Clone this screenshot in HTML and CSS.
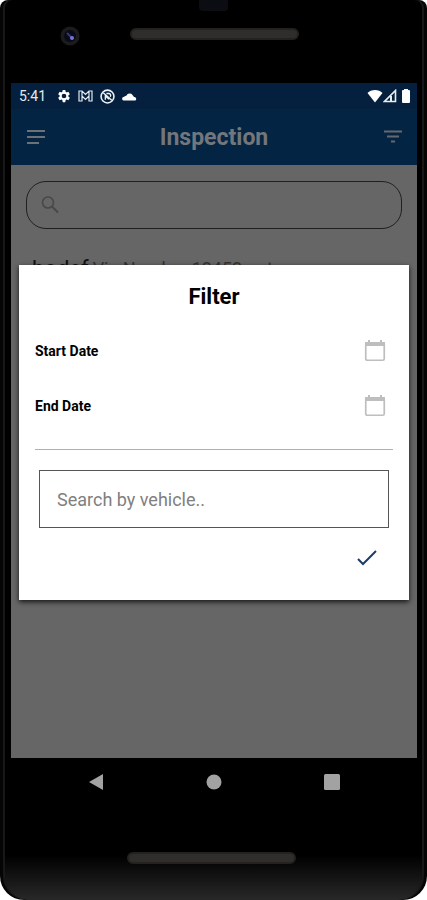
FILE: index.html
```html
<!DOCTYPE html>
<html lang="en">
<head>
<meta charset="utf-8">
<meta name="viewport" content="width=device-width, initial-scale=1">
<title>Inspection</title>
<link rel="stylesheet" href="styles.css">
</head>
<body>
<div class="phone">
  <div class="bezel-top">
    <span class="sensor"></span>
    <svg class="camera" viewBox="0 0 20 20" aria-hidden="true"><circle cx="10" cy="10" r="9.5" fill="#1b1b1c"/><circle cx="10" cy="10" r="6" fill="#090a18"/><path d="M7 7l5 5" stroke="#35377c" stroke-width="2"/><circle cx="12" cy="12" r="2" fill="#7476cf"/></svg>
    <span class="speaker"></span>
  </div>
  <div class="screen">
    <div class="status">
      <span class="time">5:41</span>
      <svg class="gear" viewBox="0 0 24 24" aria-hidden="true"><path fill="#fff" fill-rule="evenodd" d="M19.4 13a7 7 0 0 0 0-2l2.600-2-2.500-4.300-3 1.200a8 8 0 0 0-1.800-1L14.200 1.500H9.800l-.5 3.400a8 8 0 0 0-1.800 1l-3-1.200L2 9l2.600 2a7 7 0 0 0 0 2L2 15l2.500 4.300 3-1.200a8 8 0 0 0 1.800 1l.5 3.400h4.400l.5-3.400a8 8 0 0 0 1.800-1l3 1.200L22 15zM12 16a4 4 0 1 1 0-8 4 4 0 0 1 0 8z"/></svg>
      <svg class="mail" viewBox="0 0 15 12" aria-hidden="true"><path d="M1 11V1h3l3.500 3.500L11 1h3v10h-3V6L7.500 9.500 4 6v5zM4 1v5M11 1v5" fill="none" stroke="#e4e9ef" stroke-width="1.200"/></svg>
      <svg class="blocked" viewBox="0 0 14 14" aria-hidden="true"><circle cx="7" cy="7" r="6" fill="none" stroke="#eef1f5" stroke-width="1.500"/><path d="M3 3.500l8 7M5 10V6.500l3.500 3M6 4.200h2a1.800 1.800 0 0 1 1.500 3" fill="none" stroke="#eef1f5" stroke-width="1.300"/></svg>
      <svg class="cloud" viewBox="0 0 15 10" aria-hidden="true"><path fill="#fff" d="M1.500 9.500a1.800 1.800 0 0 1 0-3.500l3-1.500a3.500 3.500 0 0 1 6-.5l1.500 2a2 2 0 0 1 1.500 3.500z"/></svg>
      <span class="system">
        <svg class="wifi" viewBox="0 0 16 14" aria-hidden="true"><path fill="#fff" d="M8 13.500L.5 4C4 0 12 0 15.500 4z"/></svg>
        <svg class="signal" viewBox="0 0 14 14" aria-hidden="true"><path d="M1.500 12.500h11v-11z" fill="none" stroke="#e9edf2" stroke-width="1.600"/><path d="M8 7v5" stroke="#e9edf2" stroke-width="2"/></svg>
        <svg class="battery" viewBox="0 0 10 14" aria-hidden="true"><path fill="#fff" d="M3 0h4v1h1a1 1 0 0 1 1 1v11a1 1 0 0 1-1 1H2a1 1 0 0 1-1-1V2a1 1 0 0 1 1-1h1z"/></svg>
      </span>
    </div>
    <header class="appbar">
      <button class="icon-button" aria-label="Menu"><svg class="menu" viewBox="0 0 18 16" aria-hidden="true"><path d="M0 2h18M0 8h18M0 14h12" stroke="#6c7176" stroke-width="2"/></svg></button>
      <h1>Inspection</h1>
      <button class="icon-button" aria-label="Filter"><svg class="filter" viewBox="0 0 18 16" aria-hidden="true"><path d="M0 2.500h18M3 7.500h12M7 12.500h4" stroke="#65696f" stroke-width="1.800"/></svg></button>
    </header>
    <main class="content">
      <label class="search">
        <svg viewBox="0 0 18 18" aria-hidden="true"><circle cx="7" cy="6.500" r="5.500" fill="none" stroke="#484848" stroke-width="1.600"/><path d="M11 10.500l6 6" stroke="#484848" stroke-width="2"/></svg>
        <input type="search" aria-label="Search inspections">
      </label>
      <p class="record"><span>bodef</span> <small>Vin Number 12452 not</small></p>
    </main>
    <div class="overlay">
      <form class="dialog" role="dialog" aria-labelledby="filter-title">
        <h2 id="filter-title">Filter</h2>
        <div class="date-row"><span>Start Date</span>
          <button type="button" aria-label="Choose start date"><svg viewBox="0 0 22 23" aria-hidden="true"><rect x="1.750" y="3.750" width="18.500" height="17.500" rx="1.500" fill="none" stroke="#bebebe" stroke-width="1.700"/><path d="M1 3h20v4H1zM4 1h2v3H4zM16 1h2v3h-2z" fill="#bebebe"/></svg></button>
        </div>
        <div class="date-row"><span>End Date</span>
          <button type="button" aria-label="Choose end date"><svg viewBox="0 0 22 23" aria-hidden="true"><rect x="1.750" y="3.750" width="18.500" height="17.500" rx="1.500" fill="none" stroke="#bebebe" stroke-width="1.700"/><path d="M1 3h20v4H1zM4 1h2v3H4zM16 1h2v3h-2z" fill="#bebebe"/></svg></button>
        </div>
        <hr>
        <input class="vehicle" type="text" placeholder="Search by vehicle.." aria-label="Search by vehicle">
        <div class="actions"><button type="submit" aria-label="Apply filter"><svg viewBox="0 0 20 16" aria-hidden="true"><path d="M1 9l5 5L19 1" fill="none" stroke="#1c3e66" stroke-width="2"/></svg></button></div>
      </form>
    </div>
  </div>
  <nav class="navbar">
    <button aria-label="Back"><svg viewBox="0 0 16 16" aria-hidden="true"><path d="M1 8L15 0v16z" fill="#a2a2a2"/></svg></button>
    <button aria-label="Home"><svg viewBox="0 0 16 16" aria-hidden="true"><circle cx="8" cy="8" r="7.500" fill="#a2a2a2"/></svg></button>
    <button aria-label="Recent apps"><svg viewBox="0 0 16 16" aria-hidden="true"><rect width="16" height="16" rx="1.500" fill="#a2a2a2"/></svg></button>
  </nav>
  <div class="bezel-bottom"><span class="speaker"></span></div>
</div>
</body>
</html>
```

FILE: styles.css
```css
* {
  box-sizing: border-box;
}

body {
  margin: 0;
  background: #fff;
  font-family: Roboto, sans-serif;
}

button {
  display: flex;
  align-items: center;
  justify-content: center;
  padding: 0;
  border: 0;
  background: none;
}

svg {
  display: block;
  flex: none;
}

.phone {
  display: flex;
  flex-direction: column;
  min-height: 100vh;
  padding: 0 10px 0 11px;
  background: linear-gradient(transparent calc(100% - 45px), #282828), #000;
  border-radius: 8px 8px 24px 24px;
  box-shadow: inset 3px 0 0 #050505, inset -3px 0 0 #050505, inset 5px 0 0 #181818, inset -5px 0 0 #181818;
  overflow: hidden;
}

.bezel-top {
  position: relative;
  display: flex;
  justify-content: center;
  height: 83px;
  padding-top: 28px;
}

.sensor {
  position: absolute;
  top: 0;
  left: 188px;
  width: 29px;
  height: 11px;
  border-radius: 0 0 4px 4px;
  background: #0c0d12;
}

.camera {
  position: absolute;
  top: 26px;
  left: 49px;
  width: 20px;
  height: 20px;
}

.speaker {
  width: 169px;
  height: 12px;
  border: 2px solid #24221f;
  border-radius: 6px;
  background: #302e2c;
}

.screen {
  position: relative;
  display: flex;
  flex: 1;
  flex-direction: column;
  background: #666;
}

.status {
  display: flex;
  align-items: center;
  height: 26px;
  padding: 0 6px 0 8px;
  background: #04203e;
}

.time {
  margin-right: 11px;
  color: #e4e9ef;
  font-size: 14px;
}

.gear {
  width: 14px;
  height: 14px;
  margin-right: 7px;
}

.mail {
  width: 15px;
  height: 12px;
  margin-right: 7px;
}

.blocked {
  width: 15px;
  height: 15px;
  margin-right: 7px;
}

.cloud {
  width: 15px;
  height: 10px;
}

.system {
  display: flex;
  align-items: center;
  margin-left: auto;
}

.wifi {
  width: 16px;
  height: 14px;
}

.signal {
  width: 14px;
  height: 14px;
  margin-right: 4px;
}

.battery {
  width: 10px;
  height: 14px;
}

.appbar {
  display: flex;
  align-items: center;
  justify-content: space-between;
  height: 56px;
  padding: 0 12px;
  background: #042443;
}

.appbar h1 {
  margin: 0;
  color: #73777b;
  font-size: 23px;
  font-weight: 700;
}

.icon-button {
  width: 25px;
  height: 32px;
}

.menu,
.filter {
  width: 18px;
  height: 16px;
}

.content {
  padding: 16px 15px 0;
}

.search {
  display: flex;
  align-items: center;
  height: 48px;
  padding: 0 14px;
  border: 1px solid #202020;
  border-radius: 20px;
}

.search svg {
  width: 18px;
  height: 18px;
}

.search input {
  flex: 1;
  min-width: 0;
  border: 0;
  outline: 0;
  background: none;
}

.record {
  display: flex;
  gap: 4px;
  margin: 25px 6px 0;
  color: #101010;
  font-size: 22px;
  line-height: 30px;
}

.record small {
  color: #333;
  font-size: 18px;
  line-height: 30px;
}

.overlay {
  position: absolute;
  inset: 0;
  padding: 182px 8px 0;
}

.dialog {
  padding: 16px;
  background: #fff;
  box-shadow: 0 2px 5px rgba(0, 0, 0, 0.8);
}

.dialog h2 {
  margin: 0 0 10px;
  color: #000;
  font-size: 22px;
  font-weight: 700;
  line-height: 32px;
  text-align: center;
}

.date-row {
  display: flex;
  align-items: center;
  justify-content: space-between;
  height: 55px;
  padding-right: 7px;
  color: #000;
  font-size: 14px;
  font-weight: 700;
}

.date-row svg {
  width: 22px;
  height: 23px;
}

.dialog hr {
  margin: 16px 0 20px;
  border: 0;
  border-top: 1px solid #b0b0b0;
}

.vehicle {
  display: block;
  width: calc(100% - 8px);
  height: 58px;
  margin: 0 4px;
  padding: 0 17px;
  border: 1px solid #555;
  border-radius: 0;
  outline: 0;
  background: #fff;
  font: 18px Roboto, sans-serif;
}

.vehicle::placeholder {
  color: #808080;
}

.actions {
  display: flex;
  justify-content: flex-end;
  padding: 14px 10px 10px;
}

.actions button {
  width: 32px;
  height: 32px;
}

.actions svg {
  width: 20px;
  height: 16px;
}

.navbar {
  display: flex;
  align-items: center;
  justify-content: space-around;
  height: 48px;
  padding: 0 26px;
}

.navbar button {
  width: 32px;
  height: 32px;
}

.navbar svg {
  width: 16px;
  height: 16px;
}

.bezel-bottom {
  display: flex;
  justify-content: center;
  height: 94px;
  padding: 46px 5px 0 0;
}
```
